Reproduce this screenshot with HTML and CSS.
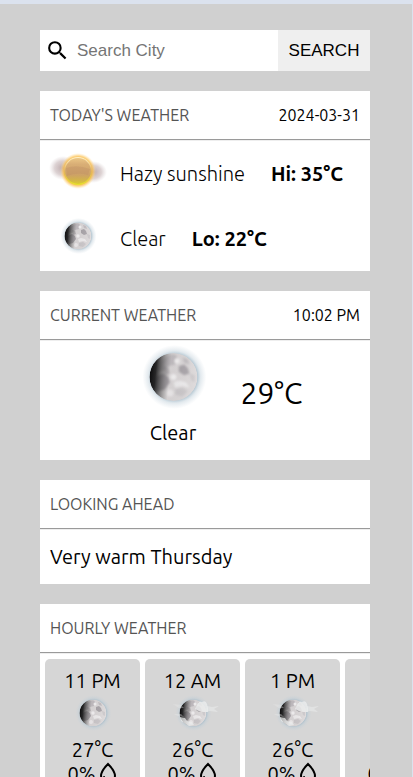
FILE: index.html
```html
<!DOCTYPE html>
<html lang="en">
<head>
<meta charset="utf-8">
<meta name="viewport" content="width=device-width, initial-scale=1">
<title>Weather</title>
<link rel="stylesheet" href="styles.css">
</head>
<body>
<svg class="sprite" aria-hidden="true">
  <defs>
    <radialGradient id="halo">
      <stop offset=".7" stop-color="#a3bac8" stop-opacity=".9"/>
      <stop offset=".82" stop-color="#b9cad5" stop-opacity=".4"/>
      <stop offset="1" stop-color="#c5d2dc" stop-opacity="0"/>
    </radialGradient>
    <linearGradient id="shade" x1="0" y1=".45" x2="1" y2=".55">
      <stop offset="0" stop-color="#0c0c0d"/>
      <stop offset=".12" stop-color="#19191a" stop-opacity=".93"/>
      <stop offset=".27" stop-color="#444" stop-opacity=".5"/>
      <stop offset=".42" stop-color="#777" stop-opacity=".06"/>
      <stop offset="1" stop-color="#fff" stop-opacity=".15"/>
    </linearGradient>
    <radialGradient id="corona">
      <stop offset=".7" stop-color="#f5a51d"/>
      <stop offset=".85" stop-color="#fdc65c" stop-opacity=".65"/>
      <stop offset="1" stop-color="#ffe2a8" stop-opacity="0"/>
    </radialGradient>
    <linearGradient id="disc" x1="0" y1="0" x2="0" y2="1">
      <stop offset="0" stop-color="#ecc887"/>
      <stop offset=".25" stop-color="#d9ae76"/>
      <stop offset=".65" stop-color="#cda266"/>
      <stop offset=".85" stop-color="#d3b548"/>
      <stop offset="1" stop-color="#dfd02a"/>
    </linearGradient>
    <linearGradient id="rim" x1="0" y1="0" x2="0" y2="1">
      <stop offset="0" stop-color="#fff0c5"/>
      <stop offset=".5" stop-color="#e3b45c"/>
      <stop offset="1" stop-color="#e8e22e"/>
    </linearGradient>
    <radialGradient id="mist">
      <stop offset="0" stop-color="#a58b8d" stop-opacity=".75"/>
      <stop offset=".6" stop-color="#b39c9e" stop-opacity=".45"/>
      <stop offset="1" stop-color="#c9b9bb" stop-opacity="0"/>
    </radialGradient>
    <filter id="soft" x="-30%" y="-30%" width="160%" height="160%"><feGaussianBlur stdDeviation=".7"/></filter>
    <clipPath id="moon-edge"><circle cx="30" cy="18" r="13.5"/></clipPath>
  </defs>
  <symbol id="moon" viewBox="0 0 60 36">
    <circle cx="30.5" cy="18" r="18" fill="url(#halo)"/>
    <g clip-path="url(#moon-edge)">
      <circle cx="30" cy="18" r="13.5" fill="#dad6d7"/>
      <g filter="url(#soft)" fill="#99949a">
        <path d="M27 6q4-2 5 1l-1 4-4 1-3 3-3-1 2-5z" opacity=".4"/>
        <path d="M33 12l3-1 2 2 1 3-3 1-3-2z" opacity=".8"/>
        <path d="M35 7l3 1 1 3-3-1z" opacity=".4"/>
        <path d="M20 18l4-2 3 2 1 3-3 4-4 1-3-3z" opacity=".85"/>
        <path d="M24 12l3 1 1 3-3 1z" opacity=".5"/>
        <path d="M39 16l3 1 0 4-2-1z" opacity=".25"/>
        <path d="M31 25l4-1 3 2-3 3-4-1z" opacity=".25"/>
      </g>
      <g filter="url(#soft)" fill="#f3f1f2">
        <circle cx="30" cy="18" r="1.700"/>
        <circle cx="32" cy="9" r="1.500"/>
        <path d="M30 21l3-1 4 1 2 3-4-1-4 1z" opacity=".8"/>
        <circle cx="28" cy="27" r="2" opacity=".7"/>
      </g>
      <circle cx="30" cy="18" r="13.5" fill="url(#shade)"/>
    </g>
  </symbol>
  <symbol id="cloudy-moon" viewBox="0 0 60 36">
    <use href="#moon" width="60" height="36"/>
    <g filter="url(#soft)" fill="#ebecec">
      <path d="M34 10q2-5 5-3 4-2 5 2l1 4 0 4-5 0-4-1-4-2z" opacity=".85"/>
      <path d="M44 11l5 1 7-1-5 3 4 3-8-1-4 1z" opacity=".55"/>
      <path d="M10 9l8 1 3 3-5 0zM11 19l7 0 3 3-6-1z" opacity=".35"/>
      <path d="M17 22l5 1 2 3 5 1 2 3-5 1-5-3-3-2z" opacity=".75"/>
    </g>
  </symbol>
  <symbol id="hazy-sun" viewBox="0 0 60 36">
    <ellipse cx="15" cy="15" rx="14" ry="12" fill="url(#mist)"/>
    <ellipse cx="45" cy="19" rx="14" ry="11" fill="url(#mist)"/>
    <circle cx="30" cy="18" r="18" fill="url(#corona)"/>
    <circle cx="30" cy="18" r="13.5" fill="url(#disc)" stroke="url(#rim)" stroke-width="1.200"/>
    <path d="M18 15q11-4 24 1l-2 6q-10-3-21 1z" fill="#bd8c66" opacity=".35" filter="url(#soft)"/>
  </symbol>
  <symbol id="drop" viewBox="0 0 20 24">
    <path d="M10 2C6 6 3 9.500 3 14a7 7 0 0 0 14 0C17 9.500 14 6 10 2z" fill="none" stroke="#000" stroke-width="2"/>
    <path d="M6 14a4 4 0 0 0 4 4" fill="none" stroke="#000" stroke-width="1.500"/>
  </symbol>
</svg>

<main class="page">
  <form class="search">
    <label class="search-label" for="city" aria-label="City">
      <svg class="search-icon" viewBox="0 0 24 24"><path d="M15.500 14h-.79l-.28-.27A6.470 6.470 0 0 0 16 9.500 6.500 6.500 0 1 0 9.500 16c1.610 0 3.090-.59 4.230-1.570l.27.28v.79l5 4.990L20.490 19zM9.500 14a4.500 4.500 0 1 1 0-9 4.500 4.500 0 0 1 0 9z"/></svg>
    </label>
    <input class="search-input" id="city" type="text" placeholder="Search City">
    <button class="search-button" type="button">SEARCH</button>
  </form>

  <section class="card">
    <header class="card-head"><h2>TODAY'S WEATHER</h2><time>2024-03-31</time></header>
    <div class="period"><svg class="icon"><use href="#hazy-sun"/></svg><span class="phrase">Hazy sunshine</span><strong>Hi: 35°C</strong></div>
    <div class="period"><svg class="icon"><use href="#moon"/></svg><span class="phrase">Clear</span><strong>Lo: 22°C</strong></div>
  </section>

  <section class="card">
    <header class="card-head"><h2>CURRENT WEATHER</h2><time>10:02 PM</time></header>
    <div class="current">
      <div class="condition"><svg class="icon-large"><use href="#moon"/></svg><span>Clear</span></div>
      <span class="temperature">29°C</span>
    </div>
  </section>

  <section class="card">
    <header class="card-head"><h2>LOOKING AHEAD</h2></header>
    <p class="outlook">Very warm Thursday</p>
  </section>

  <section class="card">
    <header class="card-head"><h2>HOURLY WEATHER</h2></header>
    <div class="hours">
      <article class="hour"><span>11 PM</span><svg class="icon"><use href="#moon"/></svg><span>27°C</span><span class="rain">0%<svg class="drop"><use href="#drop"/></svg></span></article>
      <article class="hour"><span>12 AM</span><svg class="icon"><use href="#cloudy-moon"/></svg><span>26°C</span><span class="rain">0%<svg class="drop"><use href="#drop"/></svg></span></article>
      <article class="hour"><span>1 PM</span><svg class="icon"><use href="#cloudy-moon"/></svg><span>26°C</span><span class="rain">0%<svg class="drop"><use href="#drop"/></svg></span></article>
      <article class="hour"><span>2 PM</span><svg class="icon"><use href="#cloudy-moon"/></svg><span>26°C</span><span class="rain">0%<svg class="drop"><use href="#drop"/></svg></span></article>
    </div>
  </section>
</main>
</body>
</html>
```
FILE: styles.css
```css
* { box-sizing: border-box; }

body {
  margin: 0;
  font-family: Ubuntu, "Open Sans", "Noto Sans", sans-serif;
  font-size: 20px;
  line-height: 24px;
  color: #000;
}

.sprite { position: absolute; width: 0; height: 0; }

.page {
  height: 100vh;
  padding: 26px 42px 20px 40px;
  border-top: 4px solid #dbe2ee;
  border-right: 1px solid #dbe2ee;
  background: #d0d0d0;
  overflow-y: auto;
  scrollbar-width: none;
}

.search { display: flex; height: 41px; margin-bottom: 20px; background: #fff; }
.search-label { display: flex; align-items: center; padding: 0 5px; }
.search-icon { width: 25px; height: 25px; }
.search-input,
.search-button {
  border: 0;
  font-family: "Liberation Sans", Arial, sans-serif;
  font-size: 17px;
}
.search-input { flex: 1; min-width: 0; padding: 0 2px; background: transparent; outline: 0; }
.search-input::placeholder { color: #757575; }
.search-button { width: 92px; padding: 0; background: #efefef; color: #000; }

.card { margin-bottom: 20px; background: #fff; }
.card-head {
  display: flex;
  justify-content: space-between;
  align-items: center;
  height: 49px;
  margin-bottom: 1px;
  padding: 0 10px;
  border-bottom: 1px solid #9a9a9a;
  box-shadow: 0 1px #eee;
  font-size: 16px;
}
.card-head h2 { margin: 0; font-size: 16px; font-weight: 400; color: #555; }

.icon { width: 60px; height: 36px; flex: none; }
.icon-large { width: 107px; height: 64px; }

.period { display: flex; align-items: center; height: 65px; padding: 0 8px; }
.period .icon { margin-bottom: 5px; }
.phrase { margin: 0 26px 0 12px; font-weight: 300; }
.period strong { font-weight: 600; }

.current { display: flex; justify-content: center; height: 119px; padding: 4px 0 0 12px; gap: 14px; }
.condition { display: flex; flex-direction: column; align-items: center; gap: 12px; }
.temperature { margin-top: 30px; font-size: 30px; line-height: 36px; }

.outlook { margin: 0; padding: 15px 10px; }

.hours { display: flex; gap: 5px; padding: 5px; overflow: hidden; }
.hour {
  display: flex;
  flex: none;
  flex-direction: column;
  align-items: center;
  width: 95px;
  padding: 10px 0;
  border-radius: 5px;
  background: #d6d6d6;
}
.hour .icon { margin: 2px 0 7px; }
.rain { display: flex; align-items: center; gap: 2px; }
.drop { width: 20px; height: 24px; }
```
